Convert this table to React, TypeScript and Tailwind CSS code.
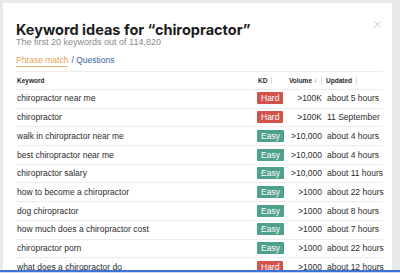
import { X } from "lucide-react";

type Row = {
  keyword: string;
  kd: "Hard" | "Easy";
  volume: string;
  updated: string;
};

const rows: Row[] = [
  { keyword: "chiropractor near me", kd: "Hard", volume: ">100K", updated: "about 5 hours" },
  { keyword: "chiropractor", kd: "Hard", volume: ">100K", updated: "11 September" },
  { keyword: "walk in chiropractor near me", kd: "Easy", volume: ">10,000", updated: "about 4 hours" },
  { keyword: "best chiropractor near me", kd: "Easy", volume: ">10,000", updated: "about 4 hours" },
  { keyword: "chiropractor salary", kd: "Easy", volume: ">10,000", updated: "about 11 hours" },
  { keyword: "how to become a chiropractor", kd: "Easy", volume: ">1000", updated: "about 22 hours" },
  { keyword: "dog chiropractor", kd: "Easy", volume: ">1000", updated: "about 8 hours" },
  { keyword: "how much does a chiropractor cost", kd: "Easy", volume: ">1000", updated: "about 7 hours" },
  { keyword: "chiropractor porn", kd: "Easy", volume: ">1000", updated: "about 22 hours" },
  { keyword: "what does a chiropractor do", kd: "Hard", volume: ">1000", updated: "about 12 hours" },
];

const cols = "grid grid-cols-[241px_30px_35px_61px]";

function Divider() {
  return <span className="ml-[4px] inline-block h-[7px] w-px bg-[#d8d8d8] align-middle" />;
}

export default function App() {
  return (
    <div className="relative h-[273px] w-[400px] overflow-hidden bg-[#e9e9e9] pl-[3px] pt-[3px]">
      <div
        className="relative h-[300px] w-[389px] bg-white px-[13px] pt-[18px]"
        style={{ fontFamily: "'Liberation Sans', Arial, sans-serif" }}
      >
        <button className="absolute right-[9px] top-[16px] text-[#bdbdbd]">
          <X size={11} strokeWidth={2} />
        </button>

        <h1
          className="text-[14.5px] font-bold leading-[17px] text-[#1c1c1c]"
          style={{ fontFamily: "Inter, 'Noto Sans', sans-serif" }}
        >
          Keyword ideas for “chiropractor”
        </h1>
        <p className="-mt-[2px] text-[9px] leading-[12px] text-[#8a8a8a]">
          The first 20 keywords out of 114,820
        </p>

        <div className="mt-[7px] flex h-[16px] items-start gap-[3px] text-[8.5px] leading-[11px]">
          <span className="border-b border-[#f0b070] text-[#e9a05a]">Phrase match</span>
          <span className="text-[#3563a0]">/ Questions</span>
        </div>

        <div className="w-[367px] border-t border-[#ececec]">
          <div className={`${cols} h-[17px] items-center text-[6.5px] font-bold text-[#2a2a2a]`}>
            <span className="pl-[1px]">Keyword</span>
            <span className="flex items-center pl-[1px]">
              KD
              <Divider />
            </span>
            <span className="flex items-center whitespace-nowrap pl-[2px]">
              Volume
              <span className="ml-[2px] text-[6px]">↓</span>
              <Divider />
            </span>
            <span className="flex items-center pl-[4px]">
              Updated
              <Divider />
            </span>
          </div>

          {rows.map((r) => (
            <div
              key={r.keyword}
              className={`${cols} h-[18.7px] items-center border-t border-[#ececec] text-[8.5px] text-[#2b2b2b]`}
            >
              <span className="pl-[1px]">{r.keyword}</span>
              <span>
                <span
                  className={`inline-block rounded-[1px] px-[4px] text-[8.5px] leading-[12px] text-white ${
                    r.kd === "Hard" ? "bg-[#d3524c]" : "bg-[#4fa08c]"
                  }`}
                >
                  {r.kd}
                </span>
              </span>
              <span className="text-right">{r.volume}</span>
              <span className="whitespace-nowrap pl-[5px]">{r.updated}</span>
            </div>
          ))}
        </div>
      </div>
      <div className="absolute bottom-[1px] left-0 h-[2px] w-full bg-[#3b73d9]" />
      <div className="absolute bottom-0 left-0 h-px w-full bg-[#cfd8e6]" />
    </div>
  );
}
